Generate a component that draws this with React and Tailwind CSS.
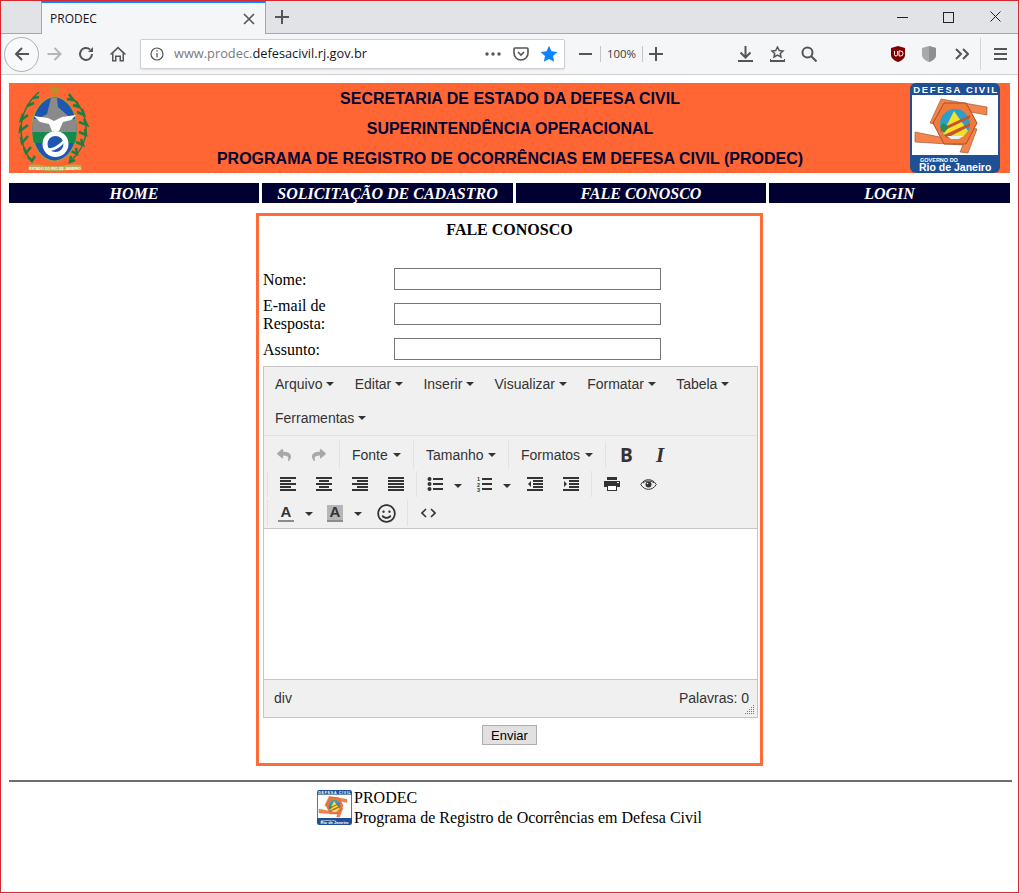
import React from "react";
import { FaReply, FaShare, FaRegSmile } from "react-icons/fa";

const menuItems = ["Arquivo", "Editar", "Inserir", "Visualizar", "Formatar", "Tabela"];
const navItems = [
  ["HOME", "w-[250px]"],
  ["SOLICITAÇÃO DE CADASTRO", "w-[251px]"],
  ["FALE CONOSCO", "w-[250px]"],
  ["LOGIN", "w-[241px]"],
];

function Caret({ className = "" }) {
  return <span className={`inline-block w-0 h-0 border-x-4 border-x-transparent border-t-4 border-t-[#333] ${className}`}></span>;
}

function Sep({ className = "" }) {
  return <span className={`block w-px bg-[#e2e2e2] shrink-0 ${className}`}></span>;
}

function Lines({ rows }) {
  return (
    <svg width="18" height="16" viewBox="0 0 18 16" shapeRendering="crispEdges" fill="#333">
      {rows.map((r, i) => (
        <rect key={i} x={r[0]} y={i * 3 + 1} width={r[1]} height="2" />
      ))}
    </svg>
  );
}

function ListIcon({ numbered }) {
  return (
    <svg width="18" height="16" viewBox="0 0 18 16" fill="#333">
      <rect x="6" y="2" width="10" height="2" />
      <rect x="6" y="7" width="10" height="2" />
      <rect x="6" y="12" width="10" height="2" />
      {numbered ? (
        <g fontFamily="Liberation Sans, sans-serif" fontWeight="700" fontSize="5.500">
          <text x="1" y="5">1</text>
          <text x="1" y="10.500">2</text>
          <text x="1" y="16">3</text>
        </g>
      ) : (
        <g>
          <circle cx="2.500" cy="3" r="2" />
          <circle cx="2.500" cy="8" r="2" />
          <circle cx="2.500" cy="13" r="2" />
        </g>
      )}
    </svg>
  );
}

function IndentIcon({ out }) {
  return (
    <svg width="18" height="16" viewBox="0 0 18 16" fill="#333" shapeRendering="crispEdges">
      <rect x="1" y="1" width="16" height="2" />
      <rect x="7" y="4" width="10" height="2" />
      <rect x="7" y="7" width="10" height="2" />
      <rect x="7" y="10" width="10" height="2" />
      <rect x="1" y="13" width="16" height="2" />
      <path d={out ? "M5 5v6L2 8z" : "M2 5v6l3-3z"} shapeRendering="auto" />
    </svg>
  );
}

function PrintIcon() {
  return (
    <svg width="16" height="14" viewBox="0 0 16 14" fill="#333" shapeRendering="crispEdges">
      <rect x="3" y="0" width="10" height="3" />
      <rect x="0" y="4" width="16" height="6" />
      <rect x="3" y="8" width="10" height="6" />
      <rect x="4" y="9" width="8" height="4" fill="#fff" />
      <rect x="13" y="5" width="2" height="1" fill="#f0f0f0" />
    </svg>
  );
}

function EyeIcon() {
  return (
    <svg width="17" height="11" viewBox="0 0 17 11" fill="none" stroke="#333" strokeWidth="1">
      <path d="M.7 5.500C3 2 5.500.7 8.500.7s5.500 1.300 7.800 4.800c-2.300 3.500-4.800 4.800-7.800 4.800S3 9 .7 5.500z" />
      <path d="M3 4c1.500-1.300 3.500-2 5.500-2s4 .7 5.500 2" />
      <circle cx="8.500" cy="5.500" r="3" fill="#333" stroke="none" />
      <circle cx="7.500" cy="4.500" r=".8" fill="#ddd" stroke="none" />
    </svg>
  );
}

function ColorA({ filled }) {
  return (
    <span className={`relative flex flex-col items-center w-[16px] h-[17px] font-bold text-[15px] leading-[14px] text-[#333] font-['Liberation_Sans',sans-serif] ${filled ? "bg-[#b5b5b5]" : ""}`}>
      A
      <span className="absolute bottom-0 left-0 w-[16px] h-[2px] bg-[#8c8c8c]"></span>
    </span>
  );
}

function ToolText({ label, width }) {
  return (
    <span className={`flex items-center justify-between text-[14px] text-[#333] shrink-0 ${width}`}>
      {label}
      <Caret />
    </span>
  );
}

function Crest() {
  return (
    <svg width="72" height="90" viewBox="0 0 72 90">
      <path d="M37 1l1.800 4h4.500l-3.600 2.800 1.300 4.500-4-2.600-4 2.600 1.300-4.500-3.600-2.800h4.500z" fill="#b8912a" />
      <path d="M21 9C8 20 3 34 3 48c0 12 4 22 11 31" fill="none" stroke="#1d7f3e" strokeWidth="1.500" />
      <path d="M15 15l6-1M9 23l7-3M5 31l-2 6 7-5M3 42l-1 6 8-6M3 54l1 6 6-7M6 65l2 5 5-6M10 74l4 4 3-5" stroke="#1d7f3e" strokeWidth="2.500" fill="none" />
      <path d="M51 12c10 8 17 20 17 34 0 13-7 25-17 33" fill="none" stroke="#1d7f3e" strokeWidth="1.500" />
      <path d="M51 11l4 6-6-1M58 18l3 6-6-2M64 26l2 6-7-3M66 36l3 6-8-3M67 46l1 6-7-3M63 56l2 6-7-3M58 65l1 6-6-3M53 73l-1 6 5-2" stroke="#1d7f3e" strokeWidth="2.500" fill="none" />
      <ellipse cx="36.500" cy="46" rx="23.500" ry="33" fill="#b3962d" />
      <ellipse cx="36.500" cy="46" rx="22" ry="31.500" fill="#1e56b0" />
      <path d="M14.700 36h43.600l.2 14h-44z" fill="#8a8a8a" />
      <path d="M33 15h6l1 9 9 8 5 4H20l9-5z" fill="#8a8a8a" />
      <path d="M14.500 49h44c0 4-.5 8-1.500 11H16c-1-3-1.500-7-1.500-11z" fill="#16894e" />
      <path d="M16 33l14 2 6 3 8-4 14-2-5 5-8 2-4 9h-7l-3-7-9-2z" fill="#fff" />
      <circle cx="37.500" cy="61" r="13" fill="#fff" />
      <circle cx="37.500" cy="61" r="8" fill="#1e56b0" />
      <path d="M29 65c6 1 12-3 17-9l1 3c-5 6-11 9-16 9z" fill="#fff" />
      <path d="M11 82c8-2 16 2 25 1 9 1 18-3 27-1l1 5c-9-2-19 2-28 1-9 1-17-3-26-1z" fill="#b4ab54" />
      <text x="37" y="86.500" textAnchor="middle" fill="#fff" fontFamily="Liberation Sans, sans-serif" fontWeight="700" fontSize="3.600">ESTADO DO RIO DE JANEIRO</text>
    </svg>
  );
}

function DefesaLogo({ size }) {
  return (
    <svg width={size} height={size} viewBox="0 0 90 90">
      <rect width="90" height="90" rx="6" fill="#1f4f94" />
      <rect x="2" y="12" width="86" height="60" fill="#fff" />
      <text x="46" y="10" textAnchor="middle" fill="#fff" fontFamily="Liberation Sans, sans-serif" fontWeight="700" fontSize="9.500" letterSpacing="1.700">DEFESA CIVIL</text>
      <path d="M31 16l46 8v8L38 25l-11 17-7-2z" fill="#f5844c" stroke="#8a5230" strokeWidth=".6" />
      <path d="M5 49l45 9 9-14 8 2-9 24-8-1 3-7-48-3z" fill="#f5844c" stroke="#8a5230" strokeWidth=".6" />
      <path d="M34 20h22l11 20-11 21H34L23 40z" fill="#f07a3c" stroke="#a84e28" strokeWidth="1" />
      <circle cx="45" cy="41" r="15" fill="#2aa0c8" />
      <path d="M33 50l11-22 14 20-5 6H37z" fill="#f5e12a" />
      <path d="M30 46l30-14v3L31 49zM34 52l26-12v3L37 55z" fill="#c9512e" />
      <path d="M34 50l-4-6 3-4 6 4z" fill="#2e8c52" />
      <path d="M37 53h16l-4 3H41z" fill="#e9f3f3" />
      <text x="10" y="79" fill="#fff" fontFamily="Liberation Sans, sans-serif" fontWeight="700" fontSize="5.500">GOVERNO DO</text>
      <text x="9" y="88" fill="#fff" fontFamily="Liberation Sans, sans-serif" fontWeight="700" fontSize="10.500">Rio de Janeiro</text>
    </svg>
  );
}

function BrowserChrome() {
  return (
    <div className="font-['Noto_Sans',sans-serif]">
      <div className="flex items-stretch h-[33px] bg-[#e2e3e6] border-b border-[#a6a7a9] pl-[40px]">
        <div className="flex items-center w-[225px] h-[33px] bg-[#f5f6f8] border-x border-[#a6a7a9] border-t-2 border-t-[#0a84ff] pl-[8px] pr-[9px] justify-between">
          <span className="text-[12px] text-[#15141a] font-['Open_Sans',sans-serif]">PRODEC</span>
          <svg width="14" height="14" viewBox="0 0 14 14" stroke="#555" strokeWidth="1.600"><path d="M2 2l10 10M12 2L2 12" /></svg>
        </div>
        <svg className="ml-[9px] mt-[9px]" width="14" height="14" viewBox="0 0 14 14" stroke="#555" strokeWidth="2" shapeRendering="crispEdges"><path d="M7 0v14M0 7h14" /></svg>
        <div className="flex-1"></div>
        <svg className="mt-[10px] mr-[35px]" width="11" height="11" viewBox="0 0 11 11" stroke="#222" shapeRendering="crispEdges"><path d="M0 6h11" /></svg>
        <svg className="mt-[11px] mr-[36px]" width="11" height="11" viewBox="0 0 11 11" fill="none" stroke="#222" shapeRendering="crispEdges"><rect x=".5" y=".5" width="10" height="10" /></svg>
        <svg className="mt-[10px] mr-[17px]" width="11" height="11" viewBox="0 0 11 11" stroke="#222"><path d="M.5.5l10 10M10.500.5l-10 10" /></svg>
      </div>
      <div className="flex items-center h-[41px] bg-[#f5f6f8] border-b border-[#cfcfd1] pl-[3px]">
        <div className="flex items-center justify-center w-[35px] h-[35px] rounded-full border border-[#b1b1b3] bg-[#f8f9fb]">
          <svg width="16" height="16" viewBox="0 0 16 16" fill="none" stroke="#555" strokeWidth="2"><path d="M15 8H2M8 2L2 8l6 6" /></svg>
        </div>
        <svg className="ml-[7px]" width="17" height="16" viewBox="0 0 16 16" fill="none" stroke="#b4b5b7" strokeWidth="2"><path d="M1 8h13M8 2l6 6-6 6" /></svg>
        <svg className="ml-[15px]" width="16" height="16" viewBox="0 0 16 16" fill="none" stroke="#555" strokeWidth="2"><path d="M14 8a6 6 0 1 1-2-4.500" /><path d="M15 1v5h-5z" fill="#555" stroke="none" /></svg>
        <svg className="ml-[16px]" width="16" height="16" viewBox="0 0 16 16" fill="#555"><path d="M8 .5L0 8l1 1 1-.900V15.500h4.500V11h3v4.500H14V8.100l1 .900 1-1zM12.500 14h-1.500V9.500H5V14H3.500V7L8 2.800 12.500 7z" /></svg>
        <div className="flex items-center ml-[14px] w-[425px] h-[30px] shrink-0 bg-white border border-[#cfcfd1] rounded-[2px] shadow-[0_1px_2px_rgba(0,0,0,0.1)]">
          <svg className="ml-[9px]" width="14" height="14" viewBox="0 0 14 14" fill="none" stroke="#555" strokeWidth="1.200"><circle cx="7" cy="7" r="6" /><path d="M7 6v4.500" /><path d="M7 3.200v1.500" /></svg>
          <span className="ml-[10px] text-[12.800px] text-[#7a7a7c] font-['Open_Sans',sans-serif]">www.prodec.<span className="text-[#15141a]">defesacivil.rj.gov.br</span></span>
          <span className="flex-1"></span>
          <svg width="16" height="4" viewBox="0 0 16 4" fill="#555"><circle cx="2" cy="2" r="1.700" /><circle cx="8" cy="2" r="1.700" /><circle cx="14" cy="2" r="1.700" /></svg>
          <svg className="ml-[12px]" width="16" height="16" viewBox="0 0 16 16" fill="none" stroke="#555" strokeWidth="1.600"><path d="M2 2h12a1 1 0 0 1 1 1v4a7 7 0 0 1-14 0V3a1 1 0 0 1 1-1z" /><path d="M5 6l3 3 3-3" /></svg>
          <svg className="ml-[11px] mr-[6px]" width="18" height="18" viewBox="0 0 18 18" fill="#0a84ff"><path d="M9 .8l2.500 5.400 5.900.7-4.400 4 1.200 5.900L9 13.900l-5.200 2.900 1.200-5.900-4.400-4 5.900-.7z" /></svg>
        </div>
        <svg className="ml-[14px]" width="13" height="2" viewBox="0 0 13 2" fill="#555"><rect width="13" height="2" /></svg>
        <Sep className="ml-[8px] !bg-[#c5c5c7] h-[16px]" />
        <span className="w-[41px] text-center text-[11.500px] text-[#3b3b3d] font-['Open_Sans',sans-serif]">100%</span>
        <Sep className="!bg-[#c5c5c7] h-[16px]" />
        <svg className="ml-[6px]" width="14" height="14" viewBox="0 0 14 14" stroke="#555" strokeWidth="2" shapeRendering="crispEdges"><path d="M7 0v14M0 7h14" /></svg>
        <svg className="ml-[75px]" width="15" height="16" viewBox="0 0 15 16" fill="none" stroke="#555" strokeWidth="2"><path d="M7.500 0v11M2.500 6.500l5 5 5-5M0 15h15" /></svg>
        <svg className="ml-[17px]" width="15" height="16" viewBox="0 0 15 16" fill="none" stroke="#555" strokeWidth="1.500"><path d="M7.500 1l1.800 3.500 3.700.5-2.700 2.500.7 3.500-3.500-1.800L4 11l.7-3.500L2 5l3.700-.5z" /><path d="M0 13v2h15v-2" strokeWidth="2" /></svg>
        <svg className="ml-[16px]" width="16" height="16" viewBox="0 0 16 16" fill="none" stroke="#555" strokeWidth="2"><circle cx="6.500" cy="6.500" r="5" /><path d="M10 10l5.500 5.500" /></svg>
        <svg className="ml-[74px]" width="14" height="16" viewBox="0 0 14 16"><path d="M7 0l7 2v7c0 3-3 5.500-7 7-4-1.500-7-4-7-7V2z" fill="#800000" /><path d="M3.500 5v3.500a1.500 1.500 0 0 0 3 0V5M8 5v5h1.500a2.500 2.500 0 0 0 0-5z" fill="none" stroke="#fff" strokeWidth="1" /></svg>
        <svg className="ml-[17px]" width="14" height="16" viewBox="0 0 14 16"><path d="M7 0l7 2v7c0 3-3 5.500-7 7-4-1.500-7-4-7-7V2z" fill="#a9a9ab" /><path d="M7 0l7 2v7c0 3-3 5.500-7 7z" fill="#8f8f91" /></svg>
        <svg className="ml-[19px]" width="14" height="12" viewBox="0 0 14 12" fill="none" stroke="#555" strokeWidth="2"><path d="M1 1l5 5-5 5M8 1l5 5-5 5" /></svg>
        <Sep className="ml-[11px] !bg-[#d5d5d7] h-[32px]" />
        <svg className="ml-[13px]" width="13" height="12" viewBox="0 0 13 12" fill="#555" shapeRendering="crispEdges"><rect width="13" height="2" /><rect y="5" width="13" height="2" /><rect y="10" width="13" height="2" /></svg>
      </div>
    </div>
  );
}

function Field({ label, rowClass }) {
  return (
    <div className={`flex items-center ${rowClass}`}>
      <span className="w-[131px] leading-[18px] pr-[40px] pt-[1px]">{label}</span>
      <input type="text" className="w-[267px] h-[22px] border border-[#767676] bg-white" />
    </div>
  );
}

function Editor() {
  return (
    <div className="mt-[6px] w-[495px] h-[352px] border border-[#c5c5c5] bg-[#f0f0f0] flex flex-col font-['Liberation_Sans',sans-serif] text-[#333]">
      <div className="h-[69px] border-b border-[#e2e2e2] pl-[11px] text-[14px]">
        <div className="flex h-[34px] items-center gap-[20.200px]">
          {menuItems.map((m) => (
            <span key={m} className="flex items-center gap-[4px]">{m}<Caret /></span>
          ))}
        </div>
        <div className="flex h-[34px] items-center">
          <span className="flex items-center gap-[4px]">Ferramentas<Caret /></span>
        </div>
      </div>

      <div className="flex items-center h-[33px] pt-[5px] pl-[13px]">
        <FaReply className="text-[#a8a8a8] w-[14px] h-[14px]" />
        <FaShare className="ml-[21px] text-[#a8a8a8] w-[14px] h-[14px]" />
        <Sep className="ml-[13px] h-[28px]" />
        <ToolText label="Fonte" width="ml-[12px] w-[49px]" />
        <Sep className="ml-[12px] h-[28px]" />
        <ToolText label="Tamanho" width="ml-[12px] w-[70px]" />
        <Sep className="ml-[12px] h-[28px]" />
        <ToolText label="Formatos" width="ml-[12px] w-[72px]" />
        <Sep className="ml-[12px] h-[26px]" />
        <span className="ml-[14px] w-[14px] text-[19px] font-bold leading-none text-[#333] font-['Open_Sans',sans-serif]">B</span>
        <span className="ml-[22px] w-[14px] text-[21px] font-bold italic leading-none text-[#333] font-['Liberation_Serif',serif]">I</span>
      </div>

      <div className="flex items-center h-[28px] mt-[1px] pl-[3px]">
        <Sep className="h-[26px]" />
        <span className="ml-[11px]"><Lines rows={[[1, 16], [1, 11], [1, 16], [1, 11], [1, 16]]} /></span>
        <span className="ml-[18px]"><Lines rows={[[1, 16], [4, 10], [1, 16], [4, 10], [1, 16]]} /></span>
        <span className="ml-[18px]"><Lines rows={[[1, 16], [6, 11], [1, 16], [6, 11], [1, 16]]} /></span>
        <span className="ml-[18px]"><Lines rows={[[1, 16], [1, 16], [1, 16], [1, 16], [1, 16]]} /></span>
        <Sep className="ml-[11px] h-[26px]" />
        <span className="ml-[10px]"><ListIcon /></span>
        <Caret className="ml-[9px] mt-[3px]" />
        <span className="ml-[14px]"><ListIcon numbered /></span>
        <Caret className="ml-[9px] mt-[3px]" />
        <span className="ml-[15px]"><IndentIcon out /></span>
        <span className="ml-[18px]"><IndentIcon /></span>
        <Sep className="ml-[11px] h-[26px]" />
        <span className="ml-[12px]"><PrintIcon /></span>
        <span className="ml-[20px]"><EyeIcon /></span>
      </div>

      <div className="flex items-center h-[28px] mt-[1px] pl-[3px]">
        <Sep className="h-[26px]" />
        <span className="ml-[10px]"><ColorA /></span>
        <Caret className="ml-[11px] mt-[2px]" />
        <span className="ml-[14px]"><ColorA filled /></span>
        <Caret className="ml-[11px] mt-[2px]" />
        <FaRegSmile className="ml-[15px] w-[19px] h-[19px] text-[#333]" />
        <Sep className="ml-[11px] h-[26px]" />
        <svg className="ml-[13px]" width="15" height="10" viewBox="0 0 15 10" fill="none" stroke="#333" strokeWidth="1.600"><path d="M5 1L1 5l4 4M10 1l4 4-4 4" /></svg>
      </div>

      <div className="h-[152px] mt-[1px] bg-white border-y border-[#c5c5c5]"></div>

      <div className="relative flex-1 flex items-center justify-between pl-[10px] pr-[8px] text-[14px] pb-[1px]">
        <span>div</span>
        <span>Palavras: 0</span>
        <svg className="absolute right-[2px] bottom-[2px]" width="10" height="10" viewBox="0 0 10 10" fill="#777" shapeRendering="crispEdges">
          <rect x="8" y="0" width="1" height="1" />
          <rect x="6" y="2" width="1" height="1" /><rect x="8" y="2" width="1" height="1" />
          <rect x="4" y="4" width="1" height="1" /><rect x="6" y="4" width="1" height="1" /><rect x="8" y="4" width="1" height="1" />
          <rect x="2" y="6" width="1" height="1" /><rect x="4" y="6" width="1" height="1" /><rect x="6" y="6" width="1" height="1" /><rect x="8" y="6" width="1" height="1" />
          <rect x="0" y="8" width="1" height="1" /><rect x="2" y="8" width="1" height="1" /><rect x="4" y="8" width="1" height="1" /><rect x="6" y="8" width="1" height="1" /><rect x="8" y="8" width="1" height="1" />
        </svg>
      </div>
    </div>
  );
}

export default function App() {
  return (
    <div className="w-[1019px] h-[893px] overflow-hidden bg-white border border-[#d9282f] font-['Liberation_Serif',serif] text-[16px] text-black">
      <BrowserChrome />

      <div className="px-[8px] pt-[8px]">
        <div className="flex items-center justify-between w-[1001px] h-[90px] bg-[#ff6633] pl-[9px] pr-[10px]">
          <div className="w-[92px]"><Crest /></div>
          <div className="text-center font-bold leading-[30px] pt-[2px] text-[#000033] font-['Liberation_Sans',sans-serif]">
            <div>SECRETARIA DE ESTADO DA DEFESA CIVIL</div>
            <div>SUPERINTENDÊNCIA OPERACIONAL</div>
            <div>PROGRAMA DE REGISTRO DE OCORRÊNCIAS EM DEFESA CIVIL (PRODEC)</div>
          </div>
          <DefesaLogo size={90} />
        </div>

        <div className="flex gap-[3px] w-[1001px] mt-[10px]">
          {navItems.map(([label, w]) => (
            <div key={label} className={`${w} h-[20px] bg-[#000033] text-white text-center font-bold italic leading-[22px]`}>{label}</div>
          ))}
        </div>

        <div className="ml-[247px] mt-[10px] w-[507px] h-[553px] border-[3px] border-[#ff6b39] px-[4px]">
          <div className="text-center font-bold leading-[18px] mt-[5px]">FALE CONOSCO</div>
          <Field label="Nome:" rowClass="mt-[29px] h-[22px]" />
          <Field label="E-mail de Resposta:" rowClass="mt-[13px] h-[22px]" />
          <Field label="Assunto:" rowClass="mt-[13px] h-[22px]" />
          <Editor />
          <div className="flex justify-center mt-[7px]">
            <button type="button" className="w-[55px] h-[20px] bg-[#e1e1e1] border border-[#adadad] text-[13px] leading-none text-black font-['Liberation_Sans',sans-serif]">Enviar</button>
          </div>
        </div>

        <div className="w-[1003px] h-[2px] mt-[14px] bg-[#6e6e6e]"></div>

        <div className="flex ml-[308px] mt-[8px]">
          <DefesaLogo size={35} />
          <div className="ml-[2px] leading-[20px] -mt-[2px]">
            <div>PRODEC</div>
            <div>Programa de Registro de Ocorrências em Defesa Civil</div>
          </div>
        </div>
      </div>
    </div>
  );
}
